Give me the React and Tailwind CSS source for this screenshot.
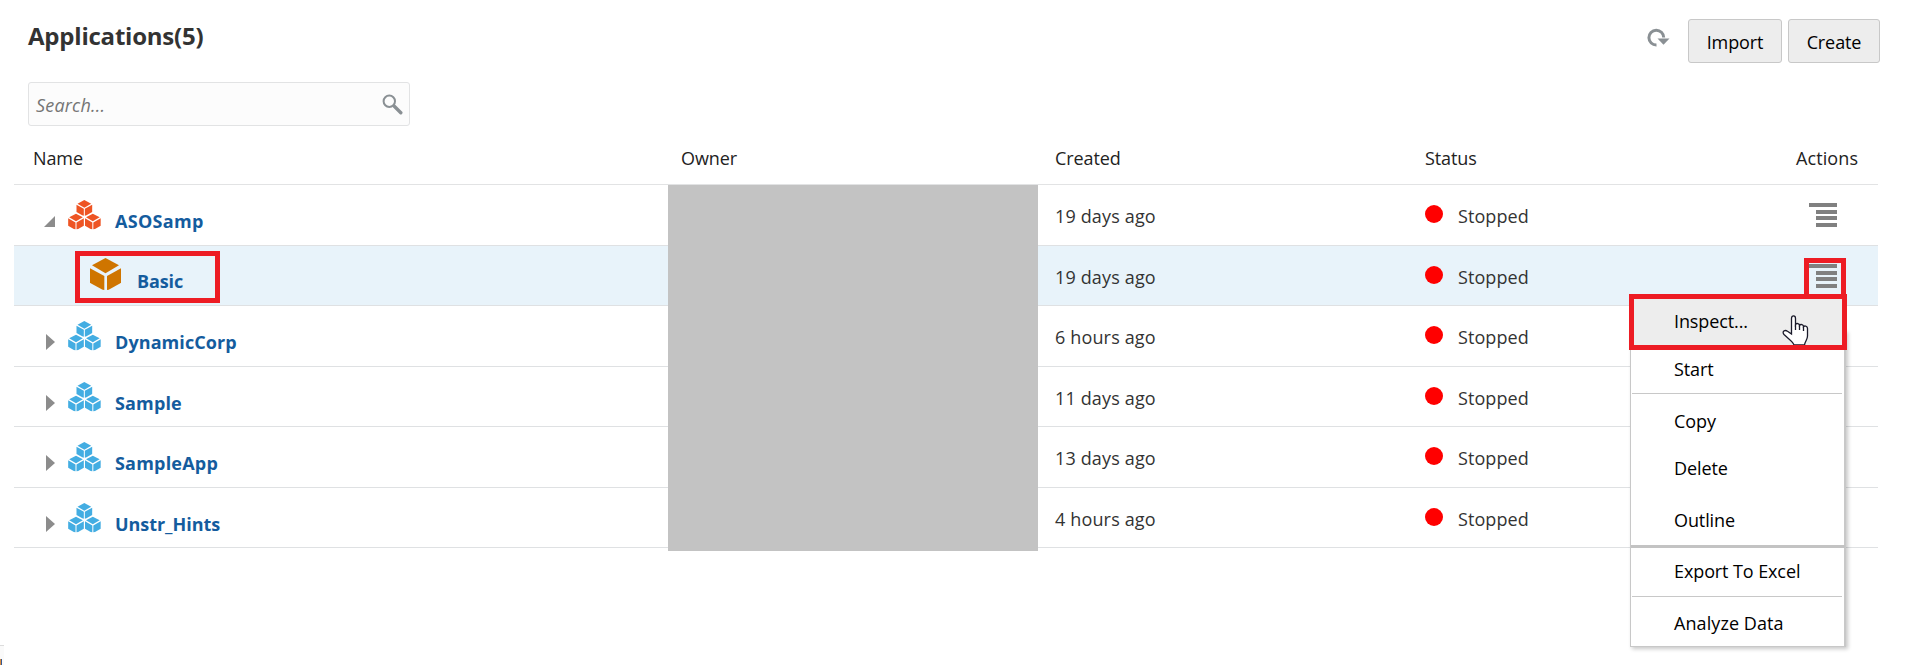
const ROWS = [
  { name: 'ASOSamp', track: 'tracking-[0.3px]', created: '19 days ago', kind: 'open', h: 'h-[61px]' },
  { name: 'Basic', track: 'tracking-[-0.1px]', created: '19 days ago', kind: 'child', h: 'h-[60px]' },
  { name: 'DynamicCorp', track: 'tracking-[0.08px]', created: '6 hours ago', kind: 'closed', h: 'h-[61px]' },
  { name: 'Sample', track: 'tracking-[0.15px]', created: '11 days ago', kind: 'closed', h: 'h-[60px]' },
  { name: 'SampleApp', track: 'tracking-[0.2px]', created: '13 days ago', kind: 'closed', h: 'h-[61px]' },
  { name: 'Unstr_Hints', track: 'tracking-[-0.05px]', created: '4 hours ago', kind: 'closed', h: 'h-[60px]' },
];

function MiniCube({ x, y }) {
  return (
    <g transform={`translate(${x} ${y})`}>
      <path d="M23.500 0 L44 11 L23.500 23 L3 11 Z" />
      <path d="M0 14 L22 26.500 L22 47 L17 46 L0 36 Z" />
      <path d="M47 14 L25 26.500 L25 47 L30 46 L47 36 Z" />
    </g>
  );
}

function Cubes({ className }) {
  return (
    <svg className={className} width="33" height="30" viewBox="0 0 99 90" fill="currentColor">
      <MiniCube x={25.5} y={0} />
      <MiniCube x={0.5} y={41} />
      <MiniCube x={51} y={41} />
    </svg>
  );
}

function BigCube() {
  return (
    <svg width="31" height="32" viewBox="0 0 93 96" fill="#cf7500">
      <path d="M46.500 0 L87 22 L46.500 46 L6 22 Z" />
      <path d="M0 31 L43 54 L43 96 L38 95 L2 76 L0 73 Z" />
      <path d="M93 31 L51 54 L51 96 L56 95 L91 76 L93 73 Z" />
    </svg>
  );
}

function ActionBars() {
  return (
    <div className="flex h-[24px] w-[28px] flex-col items-end justify-between">
      <div className="h-[4px] w-[28px] bg-[#808080]" />
      <div className="h-[4px] w-[21px] bg-[#808080]" />
      <div className="h-[4px] w-[21px] bg-[#808080]" />
      <div className="h-[4px] w-[21px] bg-[#808080]" />
    </div>
  );
}

function Row({ row }) {
  const child = row.kind === 'child';
  return (
    <div className={`flex border-b border-[#dfe1e3] ${row.h} ${child ? 'bg-[#e8f3fa]' : ''}`}>
      <div className="flex w-[1041px] items-start">
        {child ? (
          <div className="ml-[61px] mt-[5px] flex h-[52px] w-[145px] items-start border-[5px] border-[#ed1c24] pl-[10px] pt-[2px]">
            <BigCube />
            <span className={`ml-[16px] mt-[11px] font-bold leading-[24px] text-[#145c9e] ${row.track}`}>{row.name}</span>
          </div>
        ) : (
          <>
            {row.kind === 'open' ? (
              <svg className="ml-[30px] mt-[31px]" width="11" height="11" viewBox="0 0 11 11"><path d="M11 0V11H0Z" fill="#8c8c8c" /></svg>
            ) : (
              <svg className="ml-[32px] mt-[28px]" width="9" height="16" viewBox="0 0 9 16"><path d="M0 0L9 8L0 16Z" fill="#8c8c8c" /></svg>
            )}
            <Cubes className={`ml-[13px] mt-[15px] ${row.kind === 'open' ? 'text-[#ee5423]' : 'text-[#43ade2]'}`} />
            <span className={`ml-[14px] mt-[24px] font-bold leading-[24px] text-[#145c9e] ${row.track}`}>{row.name}</span>
          </>
        )}
      </div>
      <div className="w-[370px] pt-[19px] leading-[24px] tracking-[0.15px]">{row.created}</div>
      <div className="flex w-[370px] items-start">
        <div className="mt-[20px] size-[18px] rounded-full bg-[#ff0000]" />
        <span className="ml-[15px] mt-[19px] leading-[24px] tracking-[0.08px]">Stopped</span>
      </div>
      {child ? (
        <div className="ml-[9px] mt-[12px] h-[42px] w-[42px] border-[5px] border-[#ed1c24] pt-[1px]"><ActionBars /></div>
      ) : (
        <div className="ml-[14px] mt-[18px]"><ActionBars /></div>
      )}
    </div>
  );
}

function MenuItem({ children, className = '' }) {
  return <div className={`whitespace-nowrap pl-[43px] leading-[47px] ${className}`}>{children}</div>;
}

function Menu() {
  return (
    <div className="absolute left-[1629px] top-[294px] w-[218px] text-black">
      <div className="relative z-10 flex h-[56px] justify-between border-[5px] border-[#ed1c24] bg-[#ededed] pl-[40px]">
        <span className="leading-[45px]">Inspect...</span>
        <svg className="mr-[33px] mt-[15px]" width="27" height="31" viewBox="0 0 27 31">
          <path d="M9.500 20V4.500C9.500 1 13.500 1 13.500 4.500V10.500C14.500 8.800 17.500 9.500 17.500 11.300C18.800 9.800 21.500 10.600 21.500 12.600C23 11.300 25.500 12.300 25.500 14.500V22C25.500 26 23 27 22.500 31H12C11.500 28 6 24.500 2 20.500C-0.500 17.500 3 15.500 5.500 17.300L9.500 20Z" fill="#fff" stroke="#1a1a2a" strokeWidth="1.300" />
          <path d="M13.500 10.500V16M17.500 11.300V16M21.500 12.600V17" fill="none" stroke="#1a1a2a" strokeWidth="1.300" />
        </svg>
      </div>
      <div className="-mt-[20px] ml-px w-[216px] border border-r-2 border-[#c8c8c8] bg-white pt-[19px] shadow-[2px_2px_4px_rgba(0,0,0,0.22)]">
        <MenuItem className="-mt-px h-[44px] leading-[40px]!">Start</MenuItem>
        <div className="ml-[1px] mr-[2px] h-px bg-[#c8c8c8]" />
        <MenuItem className="mt-[4px] h-[47px]">Copy</MenuItem>
        <MenuItem className="h-[47px]">Delete</MenuItem>
        <MenuItem className="h-[53px] leading-[57px]!">Outline</MenuItem>
        <div className="-mr-px h-[3px] bg-[#c3c3c3]" />
        <MenuItem className="h-[48px] leading-[46px]!">Export To Excel</MenuItem>
        <div className="ml-[1px] mr-[2px] h-px bg-[#c8c8c8]" />
        <MenuItem className="h-[49px] leading-[52px]! tracking-[0.08px]">Analyze Data</MenuItem>
      </div>
    </div>
  );
}

export default function App() {
  return (
    <div className="relative h-[665px] w-[1907px] overflow-hidden bg-white font-['Open_Sans',sans-serif] text-[18px] tracking-[-0.1px] text-[#333]">
      <div className="flex h-[82px] justify-between pl-[28px] pr-[27px]">
        <h1 className="mt-[20px] text-[24px] font-bold leading-[32px] tracking-[-0.22px]">Applications(5)</h1>
        <div className="flex items-start pt-[19px] text-black">
          <svg className="mr-[18px] mt-[8px]" width="23" height="21" viewBox="0 0 23 21">
            <path d="M9.500 18 A7.400 7.400 0 1 1 16.700 10.500" fill="none" stroke="#8a9094" strokeWidth="3" />
            <path d="M10.500 11.500H22.500L16.500 17.800Z" fill="#8a9094" />
          </svg>
          <button className="h-[44px] w-[94px] rounded-[3px] border border-[#c8c8c8] bg-[#ededed] pt-[2px] leading-[40px]">Import</button>
          <button className="ml-[6px] h-[44px] w-[92px] rounded-[3px] border border-[#c8c8c8] bg-[#ededed] pt-[2px] leading-[40px]">Create</button>
        </div>
      </div>
      <div className="ml-[28px] flex h-[44px] w-[382px] justify-between rounded-[3px] border border-[#e2e3e4] bg-[#fcfcfc] pl-[7px] pr-[6px]">
        <span className="pt-[10px] italic leading-[24px] tracking-[0.2px] text-[#757575]">Search...</span>
        <svg className="mt-[11px]" width="21" height="21" viewBox="0 0 21 21" fill="none" stroke="#8a9094">
          <circle cx="7.300" cy="7.300" r="5.700" strokeWidth="2" />
          <path d="M12.300 12.300L18.800 18.800" strokeWidth="3.400" strokeLinecap="round" />
        </svg>
      </div>
      <div className="mx-[14px] w-[1864px]">
        <div className="flex h-[59px] border-b border-[#e2e3e4] pt-[20px] leading-[24px] text-[#222]">
          <div className="w-[667px] pl-[19px]">Name</div>
          <div className="w-[374px]">Owner</div>
          <div className="w-[370px]">Created</div>
          <div className="w-[370px]">Status</div>
          <div className="ml-[1px] tracking-[0.1px]">Actions</div>
        </div>
        {ROWS.map((r) => <Row key={r.name} row={r} />)}
      </div>
      <div className="absolute left-[668px] top-[185px] h-[366px] w-[370px] bg-[#c3c3c3]" />
      <Menu />
      <div className="absolute left-0 top-[645px] h-[20px] w-[4px] border-t border-[#dcdcdc] bg-[#fafafa] pt-[13px]">
        <div className="h-[6px] w-[2px] border-l border-[#d98a3d] bg-[#355a94]" />
      </div>
    </div>
  );
}
